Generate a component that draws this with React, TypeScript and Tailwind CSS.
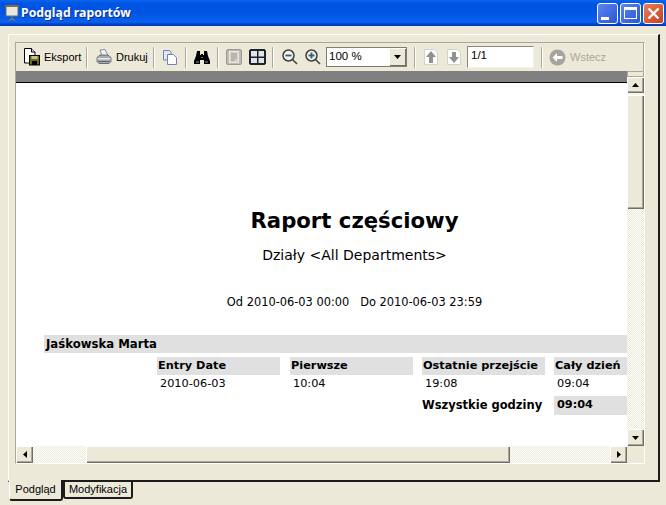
const ui = { fontFamily: '"Liberation Sans", Arial, sans-serif' };
const report = { fontFamily: '"DejaVu Sans", "Liberation Sans", sans-serif' };
const title = { fontFamily: '"Noto Sans", "Liberation Sans", sans-serif' };

function Sep({ className = "" }: { className?: string }) {
  return <div className={`w-[2px] h-[21px] shrink-0 border-l border-[#aca899] bg-white ${className}`}></div>;
}

function Arrow({ dir }: { dir: "up" | "down" | "left" | "right" }) {
  const points = {
    up: "0,4 7,4 3.5,0",
    down: "0,0 7,0 3.5,4",
    left: "4,0 4,7 0,3.5",
    right: "0,0 0,7 4,3.5",
  }[dir];
  const vertical = dir === "up" || dir === "down";
  return (
    <svg width={vertical ? 7 : 4} height={vertical ? 4 : 7} viewBox={vertical ? "0 0 7 4" : "0 0 4 7"}>
      <polygon points={points} fill="#000" />
    </svg>
  );
}

function ScrollButton({ dir, className = "" }: { dir: "up" | "down" | "left" | "right"; className?: string }) {
  return (
    <div className={`flex items-center justify-center bg-[#ece9d8] shadow-[inset_1px_1px_0_#fff,inset_-1px_-1px_0_#716f64,inset_-2px_-2px_0_#aca899] ${className}`}>
      <Arrow dir={dir} />
    </div>
  );
}

function ExportIcon() {
  return (
    <svg width="18" height="18" viewBox="0 0 18 18" className="ml-[6px] shrink-0">
      <path d="M1.500 .5h7l3.500 3.500v11h-10.500z" fill="#fff" stroke="#000" />
      <path d="M8.500 .5v3.500h3.500" fill="#ddd" stroke="#000" />
      <rect x="6.500" y="7.500" width="10" height="9.500" fill="#6b6b18" stroke="#000" />
      <rect x="8.500" y="8" width="6" height="3" fill="#c9c58a" />
      <rect x="9" y="13" width="5" height="4" fill="#000" />
    </svg>
  );
}

function PrintIcon() {
  return (
    <svg width="16" height="16" viewBox="0 0 16 16" className="ml-[8px] shrink-0">
      <path d="M4 1l5-.5 3 6h-6z" fill="#eef1f6" stroke="#6f7a8c" strokeWidth=".8" />
      <path d="M1 8.500l3-2.500h8l3 2.500v4l-2 2h-10l-2-2z" fill="#a9acb0" stroke="#55585c" strokeWidth=".8" />
      <path d="M1.500 9h13v1.500h-13z" fill="#e7e7e7" />
      <path d="M2.500 12.500h11" stroke="#5f6164" />
    </svg>
  );
}

function CopyIcon() {
  return (
    <svg width="14" height="15" viewBox="0 0 14 15" className="ml-[8px] shrink-0">
      <path d="M.5 .5h6l1.500 1.500v8h-7.500z" fill="#dfe6f4" stroke="#6f84b5" />
      <path d="M4.500 4.500h6l3 3v7h-9z" fill="#fff" stroke="#6f84b5" />
    </svg>
  );
}

function BinocularsIcon() {
  return (
    <svg width="16" height="15" viewBox="0 0 16 15" className="ml-[7px] shrink-0">
      <path d="M3 1h3v4h1v-1h2v1h1v-4h3l1 5 2 5v3h-6v-4h-4v4h-6v-3l2-5z" fill="#000" />
      <path d="M2 11h3v2h-3zM11 11h3v2h-3z" fill="#4a4a4a" />
      <path d="M7 7h2v1h-2z" fill="#777" />
    </svg>
  );
}

function PageViewIcon() {
  return (
    <svg width="16" height="16" viewBox="0 0 16 16" className="ml-[7px] shrink-0">
      <rect x=".5" y=".5" width="15" height="15" rx="1.500" fill="#bebcb4" stroke="#9a9890" />
      <rect x="3.500" y="2.500" width="9" height="11" fill="#d6d4cc" stroke="#eeeeee" strokeWidth=".8" />
      <path d="M5 5h6M5 7h6M5 9h6M5 11h4" stroke="#9a9890" />
    </svg>
  );
}

function GridViewIcon() {
  return (
    <svg width="17" height="16" viewBox="0 0 17 16" className="ml-[7px] shrink-0">
      <rect x=".5" y=".5" width="16" height="15" rx="1.500" fill="#1d2228" stroke="#1d2228" />
      <rect x="2" y="2" width="6" height="5.500" fill="#dde6ee" />
      <rect x="9.500" y="2" width="5.500" height="5.500" fill="#dde6ee" />
      <rect x="2" y="9" width="6" height="5" fill="#dde6ee" />
      <rect x="9.500" y="9" width="5.500" height="5" fill="#dde6ee" />
    </svg>
  );
}

function ZoomIcon({ plus, className = "" }: { plus?: boolean; className?: string }) {
  return (
    <svg width="16" height="16" viewBox="0 0 16 16" className={`shrink-0 ${className}`}>
      <path d="M10.500 10.500l4.500 4.500" stroke="#444" strokeWidth="1.600" />
      <circle cx="6.500" cy="6.500" r="5.500" fill="#f3f2ea" stroke="#3f3f38" strokeWidth="1.500" />
      <path d="M3.500 6.500h6" stroke="#2f5a8f" strokeWidth="1.800" />
      {plus && <path d="M6.500 3.500v6" stroke="#2f5a8f" strokeWidth="1.800" />}
    </svg>
  );
}

function PageArrowIcon({ down, className = "" }: { down?: boolean; className?: string }) {
  return (
    <svg width="14" height="16" viewBox="0 0 14 16" className={`shrink-0 ${className}`}>
      <path d="M.5 .5h10l3 3v12h-13z" fill="#fff" stroke="#d5d3c8" />
      <path
        d={down ? "M5 3h4v5h3l-5 6-5-6h3z" : "M7 2l5 6h-3v6h-4v-6h-3z"}
        fill="#8f938d"
      />
    </svg>
  );
}

function BackIcon() {
  return (
    <svg width="17" height="17" viewBox="0 0 17 17" className="ml-[6px] shrink-0">
      <circle cx="8.500" cy="8.500" r="8" fill="#a5a49d" />
      <path d="M3.500 8.500l4.500-4.500v3h5.500v3h-5.500v3z" fill="#fff" />
    </svg>
  );
}

function WinButton({ className = "", children }: { className?: string; children: React.ReactNode }) {
  return (
    <div className={`w-[21px] h-[21px] rounded-[3px] border border-white flex items-center justify-center ${className}`}>
      {children}
    </div>
  );
}

function Toolbar() {
  return (
    <div className="h-[28px] flex items-center border-r border-[#aca899] pl-[1px]" style={ui}>
      <ExportIcon />
      <span className="ml-[3px] w-[38px] shrink-0 text-[11px] leading-none text-black">Eksport</span>
      <Sep className="ml-[4px]" />
      <PrintIcon />
      <span className="ml-[4px] w-[32px] shrink-0 text-[11px] leading-none text-black">Drukuj</span>
      <Sep className="ml-[5px]" />
      <CopyIcon />
      <Sep className="ml-[8px]" />
      <BinocularsIcon />
      <Sep className="ml-[7px]" />
      <PageViewIcon />
      <GridViewIcon />
      <Sep className="ml-[6px]" />
      <ZoomIcon className="ml-[8px]" />
      <ZoomIcon plus className="ml-[7px]" />
      <div className="ml-[5px] w-[81px] h-[20px] shrink-0 bg-white border border-[#7f7d70] flex items-center justify-between">
        <span className="ml-[2px] text-[11.5px] leading-none text-black">100 %</span>
        <div className="w-[17px] h-[18px] flex items-center justify-center bg-[#ece9d8] shadow-[inset_1px_1px_0_#fff,inset_-1px_-1px_0_#716f64]">
          <Arrow dir="down" />
        </div>
      </div>
      <Sep className="ml-[7px]" />
      <PageArrowIcon className="ml-[8px]" />
      <PageArrowIcon down className="ml-[9px]" />
      <div className="ml-[6px] w-[67px] h-[22px] shrink-0 bg-white border border-[#8a887c] border-r-[#f5f4ec] border-b-[#f5f4ec] flex items-center">
        <span className="ml-[3px] text-[11.5px] leading-none text-black mb-[2px]">1/1</span>
      </div>
      <Sep className="ml-[7px]" />
      <BackIcon />
      <span className="ml-[4px] shrink-0 text-[11px] leading-none text-[#aca899]">Wstecz</span>
    </div>
  );
}

function Report() {
  return (
    <div className="flex-1 bg-white overflow-hidden text-black" style={report}>
      <div className="pl-[66px] text-center">
        <h1 className="mt-[122px] h-[32px] text-[21.2px] leading-[32px] font-bold">Raport częściowy</h1>
        <p className="mt-[3px] h-[30px] text-[14px] leading-[30px]">Działy &lt;All Departments&gt;</p>
        <p className="mt-[22px] h-[20px] text-[11.4px] leading-[20px]">Od 2010-06-03 00:00&nbsp;&nbsp; Do 2010-06-03 23:59</p>
      </div>
      <div className="mt-[23px] ml-[28px] h-[18px] bg-[#e0e0e0] pl-[2px] text-[11.7px] leading-[18px] font-bold">Jaśkowska Marta</div>
      <div className="mt-[4px] ml-[141px] grid grid-cols-[133px_132px_132px_73px] text-[11.3px] leading-[18px]">
        <div className="w-[123px] h-[18px] bg-[#e0e0e0] pl-[1px] font-bold">Entry Date</div>
        <div className="w-[123px] h-[18px] bg-[#e0e0e0] pl-[1px] font-bold">Pierwsze</div>
        <div className="w-[123px] h-[18px] bg-[#e0e0e0] pl-[1px] font-bold whitespace-nowrap">Ostatnie przejście</div>
        <div className="h-[18px] bg-[#e0e0e0] pl-[1px] font-bold whitespace-nowrap overflow-hidden">Cały dzień</div>
        <div className="h-[21px] pl-[3px] leading-[18px]">2010-06-03</div>
        <div className="h-[21px] pl-[3px] leading-[18px]">10:04</div>
        <div className="h-[21px] pl-[3px] leading-[18px]">19:08</div>
        <div className="h-[21px] pl-[3px] leading-[18px]">09:04</div>
        <div></div>
        <div></div>
        <div className="h-[19px] text-[11.5px] font-bold whitespace-nowrap">Wszystkie godziny</div>
        <div className="h-[19px] bg-[#e0e0e0] pl-[3px] font-bold">09:04</div>
      </div>
    </div>
  );
}

const dither = "bg-[repeating-conic-gradient(#ece9d8_0%_25%,#ffffff_0%_50%)] bg-[length:2px_2px]";

export default function App() {
  return (
    <div className="w-[666px] h-[505px] bg-[#ece9d8] flex flex-col overflow-hidden">
      {/* Pasek tytułu */}
      <div className="h-[26px] shrink-0 flex items-center bg-[linear-gradient(180deg,#0a66ee_0%,#0054e3_14%,#0054e3_50%,#0a62ee_85%,#0044c8_92%,#0036b8_100%)]">
        <svg width="16" height="17" viewBox="0 0 16 17" className="ml-[4px]">
          <rect x="2" y="1" width="12" height="10" fill="#e8e8e2" stroke="#6a6a6a" />
          <path d="M1 1h14" stroke="#8a6a3a" strokeWidth="2" />
          <path d="M8 11v4M5 16l3-3 3 3" stroke="#777" strokeWidth="1.200" fill="none" />
        </svg>
        <span className="ml-[1px] mt-[1px] text-[12.3px] font-bold text-white [text-shadow:1px_1px_0_#0a2f8f]" style={title}>Podgląd raportów</span>
        <div className="ml-auto mr-[2px] flex gap-[2px]">
          <WinButton className="bg-[linear-gradient(135deg,#5c86ee,#2a55d8)] items-end justify-start">
            <div className="w-[8px] h-[3px] bg-white ml-[3px] mb-[3px] mt-auto"></div>
          </WinButton>
          <WinButton className="bg-[linear-gradient(135deg,#5c86ee,#2a55d8)]">
            <div className="w-[13px] h-[12px] border border-white border-t-[3px]"></div>
          </WinButton>
          <WinButton className="bg-[linear-gradient(135deg,#e8805c,#c8401c)]">
            <svg width="13" height="13" viewBox="0 0 13 13">
              <path d="M1.500 1.500l10 10M11.500 1.500l-10 10" stroke="#fff" strokeWidth="2.400" />
            </svg>
          </WinButton>
        </div>
      </div>

      {/* Zakładka */}
      <div className="mt-[8px] ml-[8px] w-[652px] h-[448px] shrink-0 border-l border-t border-white border-r-2 border-b-2 border-r-[#1c1c1c] border-b-[#1c1c1c] pl-[6px] pt-[7px]">
        <div className="w-[630px] h-[422px] flex flex-col border-l border-t border-[#aca899] border-r border-b border-r-white border-b-white">
          <Toolbar />
          <div className="flex-1 flex min-h-0">
            <div className="flex-1 flex flex-col min-w-0">
              <div className="h-[12px] bg-[#808080] border-b border-black"></div>
              <Report />
              <div className="h-[17px] flex">
                <ScrollButton dir="left" className="w-[17px]" />
                <div className={`w-[53px] ${dither}`}></div>
                <div className="w-[424px] bg-[#ece9d8] shadow-[inset_1px_1px_0_#fff,inset_-1px_-1px_0_#716f64,inset_-2px_-2px_0_#aca899]"></div>
                <div className={`flex-1 ${dither}`}></div>
                <ScrollButton dir="right" className="w-[17px]" />
              </div>
            </div>
            <div className="w-[17px] flex flex-col">
              <div className="h-[6px] bg-[#ece9d8] border border-[#aca899]"></div>
              <ScrollButton dir="up" className="h-[16px]" />
              <div className={`h-[2px] ${dither}`}></div>
              <div className="h-[114px] bg-[#ece9d8] shadow-[inset_1px_1px_0_#fff,inset_-1px_-1px_0_#716f64,inset_-2px_-2px_0_#aca899]"></div>
              <div className={`flex-1 ${dither}`}></div>
              <ScrollButton dir="down" className="h-[17px]" />
              <div className="h-[17px]"></div>
            </div>
          </div>
        </div>
      </div>

      {/* Karty */}
      <div className="ml-[9px] flex items-start text-[11px] text-black" style={ui}>
        <div className="w-[54px] h-[21px] -mt-[2px] bg-[#ece9d8] border-l border-b-2 border-r-2 border-l-white border-b-[#1c1c1c] border-r-[#1c1c1c] rounded-b-[3px] flex items-center justify-center">Podgląd</div>
        <div className="w-[70px] h-[17px] bg-[#ece9d8] border-l-2 border-b-2 border-r-2 border-[#1c1c1c] rounded-b-[3px] flex items-center justify-center">Modyfikacja</div>
      </div>
    </div>
  );
}
